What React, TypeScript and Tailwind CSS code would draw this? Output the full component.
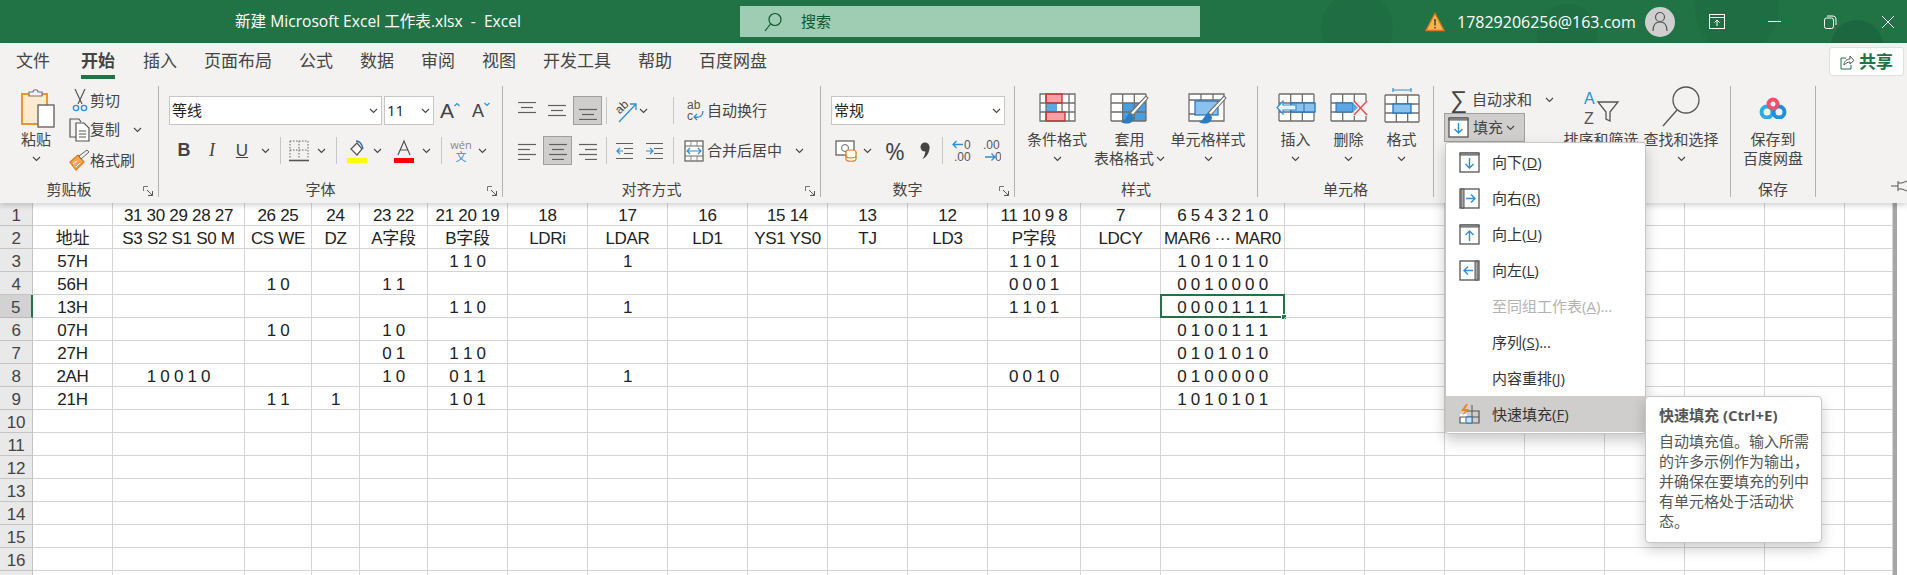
import type { ReactNode } from "react";

const blue = "#2e8fd6";
const gray = "#5f5f5f";

function Chev({ className = "" }: { className?: string }) {
  return (
    <svg width="9" height="6" viewBox="0 0 9 6" className={className}>
      <path d="M1 1l3.5 3.5L8 1" fill="none" stroke="#444" strokeWidth="1.1" />
    </svg>
  );
}

function Lines({ rows }: { rows: number[][] }) {
  return (
    <svg width="18" height="18" viewBox="0 0 18 18">
      {rows.map((r, i) => (
        <path key={i} d={`M${r[0]} ${r[2] + 0.5}H${r[1]}`} stroke={gray} strokeWidth="1.2" />
      ))}
    </svg>
  );
}

function Grid({ x, y, w, h, cols, rows }: { x: number; y: number; w: number; h: number; cols: number; rows: number }) {
  const d: string[] = [];
  for (let i = 0; i <= cols; i++) d.push(`M${x + (w * i) / cols} ${y}V${y + h}`);
  for (let i = 0; i <= rows; i++) d.push(`M${x} ${y + (h * i) / rows}H${x + w}`);
  return <path d={d.join("")} fill="none" stroke="#6e6e6e" strokeWidth="1.3" />;
}

// paint brush laid over the table style icons
const Brush = () => (
  <>
    <path d="M38 9L23 26l-3-2L36 7z" fill="#fff" stroke="#6e6e6e" strokeWidth="1.1" />
    <path d="M20 24c-3 1-4 7-9 9 5 3 13 2 13-5z" fill="#2b7cc4" />
  </>
);

const PasteIcon = () => (
  <svg width="36" height="40" viewBox="0 0 36 40">
    <rect x="2" y="6" width="25" height="30" fill="#fdeacf" stroke="#e8962e" strokeWidth="2" />
    <path d="M9 6V4h4c0-3 5-3 5 0h4v4H9z" fill="#f3f2f1" stroke="#777" strokeWidth="1.2" />
    <rect x="18" y="17" width="16" height="22" fill="#fff" stroke="#666" strokeWidth="1.4" />
  </svg>
);

const CutIcon = () => (
  <svg width="16" height="24" viewBox="0 0 16 24">
    <path d="M3 1l7 15M13 1L6 16" stroke="#555" strokeWidth="1.2" fill="none" />
    <circle cx="4" cy="20" r="2.6" fill="none" stroke={blue} strokeWidth="1.4" />
    <circle cx="12" cy="20" r="2.6" fill="none" stroke={blue} strokeWidth="1.4" />
  </svg>
);

const CopyIcon = () => (
  <svg width="21" height="24" viewBox="0 0 21 24">
    <path d="M7 19H1V1h9l2 3" fill="none" stroke="#555" strokeWidth="1.2" />
    <path d="M7 5h8l5 5v13H7z" fill="#fff" stroke="#555" strokeWidth="1.2" />
    <path d="M10 13h7M10 16h7M10 19h7" stroke="#555" />
  </svg>
);

const FormatBrushIcon = () => (
  <svg width="21" height="22" viewBox="0 0 21 22">
    <path d="M1 13l8-7 6 7-8 8z" fill="#f5a94e" stroke="#e07b12" strokeWidth="1.2" />
    <path d="M4 15l4-3M7 18l4-4" stroke="#fff" />
    <path d="M10 7l2 3 8-7-2-2z" fill="#eee" stroke="#666" />
  </svg>
);

const GrowIcon = ({ down }: { down?: boolean }) => (
  <div className="flex items-start font-['Liberation_Sans',sans-serif]">
    <span className={down ? "text-[18px] leading-[24px]" : "text-[21px] leading-[24px]"}>A</span>
    <svg width="6" height="5" viewBox="0 0 6 5" className="mt-[3px]">
      <path d={down ? "M.5 1L3 3.500 5.500 1" : "M.5 4L3 1.500 5.500 4"} fill="none" stroke={blue} strokeWidth="1.2" />
    </svg>
  </div>
);

const BorderIcon = () => (
  <svg width="20" height="22" viewBox="0 0 20 22">
    <path d="M1 1h18M1 1v18M19 1v18M10 1v18M1 10h18" stroke="#666" strokeDasharray="1.5 1.5" fill="none" />
    <path d="M0 20.500h20" stroke="#555" strokeWidth="1.6" />
  </svg>
);

const FillIcon = () => (
  <svg width="20" height="24" viewBox="0 0 20 24">
    <path d="M4 10l6-6 5 6-5 6z" fill="#fff" stroke="#555" strokeWidth="1.2" />
    <path d="M9 2c3 0 6 3 7 8" fill="none" stroke="#2b6ca8" strokeWidth="1.4" />
    <rect x="0" y="19" width="20" height="5" fill="#ffff00" />
  </svg>
);

const FontColorIcon = () => (
  <svg width="20" height="24" viewBox="0 0 20 24">
    <path d="M4 16L10 2l6 14M6 11h8" fill="none" stroke="#555" strokeWidth="1.2" />
    <rect x="0" y="19" width="20" height="5" fill="#ff0000" />
  </svg>
);

const WrapIcon = () => (
  <svg width="18" height="26" viewBox="0 0 18 26">
    <text x="1" y="11" fontSize="12" fill="#555" fontFamily="Liberation Sans">
      ab
    </text>
    <text x="1" y="22" fontSize="12" fill="#555" fontFamily="Liberation Sans">
      c
    </text>
    <path d="M8 19c6 1 9-1 9-6M11 16l-3 3 3 3" fill="none" stroke={blue} strokeWidth="1.3" />
  </svg>
);

const OrientIcon = () => (
  <span className="relative flex h-[26px] w-[24px] items-start">
    <span className="mt-[3px] -rotate-45 font-['Liberation_Sans',sans-serif] text-[12px] leading-[12px]">ab</span>
    <svg width="24" height="26" viewBox="0 0 24 26" className="absolute left-0 top-0">
      <path d="M4 24L21 6M15 6h6v6" fill="none" stroke={blue} strokeWidth="1.3" />
    </svg>
  </span>
);

const IndentIcon = ({ right }: { right?: boolean }) => (
  <svg width="19" height="18" viewBox="0 0 19 18">
    <path d="M1 1.500h17M9 6.500h9M9 11.500h9M1 16.500h17" stroke={gray} strokeWidth="1.2" />
    <path d={right ? "M1 9h6M5 6l3 3-3 3" : "M8 9H2M5 6L2 9l3 3"} fill="none" stroke={blue} strokeWidth="1.2" />
  </svg>
);

const MergeIcon = () => (
  <svg width="20" height="22" viewBox="0 0 20 22">
    <rect x="1" y="1" width="18" height="20" fill="#fff" stroke="#666" strokeWidth="1.3" />
    <path d="M1 6h18M1 16h18" stroke="#666" />
    <path d="M7 6v-5M13 6v-5M7 16v5M13 16v5" stroke="#888" />
    <path d="M3 11h14M6 8l-3 3 3 3M14 8l3 3-3 3" fill="none" stroke={blue} strokeWidth="1.2" />
  </svg>
);

const AccountingIcon = () => (
  <svg width="22" height="22" viewBox="0 0 22 22">
    <rect x="1" y="1" width="18" height="14" fill="#fff" stroke="#666" strokeWidth="1.3" />
    <circle cx="10" cy="8" r="3.500" fill="none" stroke="#666" />
    <ellipse cx="16" cy="12" rx="5" ry="2" fill="#fff" stroke="#e07b12" strokeWidth="1.2" />
    <path d="M11 12v7c0 3 10 3 10 0v-7" fill="#fff" stroke="#e07b12" strokeWidth="1.2" />
    <path d="M11 16c0 2.500 10 2.500 10 0" fill="none" stroke="#e07b12" strokeWidth="1.2" />
  </svg>
);

const CommaIcon = () => (
  <svg width="10" height="18" viewBox="0 0 10 18">
    <circle cx="5" cy="5" r="4.500" fill="#444" />
    <path d="M9.500 5c0 6-3 10-7 12 2-3 3-6 3-9z" fill="#444" />
  </svg>
);

function DecimalIcon({ inc }: { inc?: boolean }) {
  return (
    <svg width="20" height="24" viewBox="0 0 20 24">
      <path d={inc ? "M11 5.500H1M4.500 2L1 5.500 4.500 9" : "M4 18h10M10.500 14.500L14 18l-3.500 3.500"} fill="none" stroke={blue} strokeWidth="1.3" />
      {inc ? (
        <>
          <text x="12" y="10" fontSize="12" fill="#555" fontFamily="Liberation Sans">0</text>
          <text x="2" y="22" fontSize="12" fill="#555" fontFamily="Liberation Sans">.00</text>
        </>
      ) : (
        <>
          <text x="2" y="10" fontSize="12" fill="#555" fontFamily="Liberation Sans">.00</text>
          <text x="14" y="22" fontSize="12" fill="#555" fontFamily="Liberation Sans">0</text>
        </>
      )}
    </svg>
  );
}

const CondFormatIcon = () => (
  <svg width="37" height="30" viewBox="0 0 37 30">
    <rect x="1" y="1" width="35" height="27" fill="#fff" />
    <rect x="7" y="1" width="16" height="9" fill="#f8a0a6" />
    <rect x="7" y="10" width="11" height="9" fill="#5ba6e3" />
    <rect x="7" y="19" width="19" height="9" fill="#f8a0a6" />
    <path d="M1 1h35v27H1zM1 10h35M1 19h35M7 1v27M30 1v27M23 10v9" fill="none" stroke="#6e6e6e" strokeWidth="1.3" />
    <rect x="7" y="1" width="16" height="9" fill="none" stroke="#d13438" strokeWidth="1.4" />
    <rect x="7" y="19" width="19" height="9" fill="none" stroke="#d13438" strokeWidth="1.4" />
  </svg>
);

const TableStyleIcon = () => (
  <svg width="40" height="38" viewBox="0 0 40 38">
    <rect x="1" y="5" width="35" height="27" fill="#fff" />
    <rect x="12" y="14" width="24" height="18" fill="#4a9de0" />
    <Grid x={1} y={5} w={35} h={27} cols={3} rows={3} />
    <Brush />
  </svg>
);

const CellStyleIcon = () => (
  <svg width="40" height="38" viewBox="0 0 40 38">
    <rect x="1" y="5" width="35" height="27" fill="#fff" />
    <path d="M1 5h35v27H1zM1 11h35M13 5v6M25 5v6M1 25h6" fill="none" stroke="#6e6e6e" strokeWidth="1.3" />
    <rect x="7" y="12" width="23" height="14" fill="#8cc1ee" stroke="#1f72b8" strokeWidth="1.2" />
    <Brush />
  </svg>
);

const InsertCellIcon = () => (
  <svg width="40" height="30" viewBox="0 0 40 30">
    <rect x="3" y="1" width="35" height="27" fill="#fff" />
    <Grid x={3} y={1} w={35} h={27} cols={3} rows={3} />
    <rect x="15" y="10" width="24" height="9" fill="#8cc1ee" stroke="#1f72b8" strokeWidth="1.3" />
    <path d="M28 10v9" stroke="#1f72b8" />
    <path d="M20 12H7V8l-6 6.500L7 21v-4h13z" fill="#e6f1fb" stroke={blue} strokeWidth="1.2" />
  </svg>
);

const DeleteCellIcon = () => (
  <svg width="38" height="30" viewBox="0 0 38 30">
    <rect x="1" y="1" width="35" height="27" fill="#fff" />
    <Grid x={1} y={1} w={35} h={27} cols={3} rows={3} />
    <rect x="22" y="8" width="16" height="15" fill="#f3f2f1" />
    <rect x="6" y="10" width="17" height="9" fill="#5ba6e3" stroke="#1f72b8" />
    <path d="M23 10l5 4.500-5 4.500z" fill="#5ba6e3" />
    <path d="M24 8l13 14M37 8L24 22" stroke="#e8474c" strokeWidth="1.4" />
  </svg>
);

const FormatCellIcon = () => (
  <svg width="36" height="40" viewBox="0 0 36 40">
    <path d="M9 2h18M9 0v4M27 0v4" stroke={blue} strokeWidth="1.2" />
    <rect x="1" y="7" width="34" height="27" fill="#fff" />
    <Grid x={1} y={7} w={34} h={27} cols={3} rows={3} />
    <rect x="9" y="16" width="18" height="9" fill="#8cc1ee" stroke="#1f72b8" strokeWidth="1.3" />
  </svg>
);

const SortIcon = () => (
  <svg width="37" height="36" viewBox="0 0 37 36">
    <text x="1" y="14" fontSize="16" fill={blue} fontFamily="Liberation Sans">
      A
    </text>
    <text x="1" y="34" fontSize="16" fill="#555" fontFamily="Liberation Sans">
      Z
    </text>
    <path d="M15 12h20l-8 10v9l-4-2v-7z" fill="none" stroke="#555" strokeWidth="1.3" />
  </svg>
);

const FindIcon = () => (
  <svg width="38" height="44" viewBox="0 0 38 44">
    <circle cx="24" cy="14" r="13" fill="none" stroke="#555" strokeWidth="1.3" />
    <path d="M15 24L1 40" stroke="#555" strokeWidth="1.4" />
  </svg>
);

const BaiduIcon = () => (
  <svg width="28" height="22" viewBox="0 0 28 22">
    <circle cx="8" cy="15" r="5.500" fill="none" stroke="#2fa8e8" strokeWidth="4" />
    <circle cx="20" cy="15" r="5.500" fill="none" stroke="#1f8fe0" strokeWidth="4" />
    <circle cx="14" cy="7" r="4.500" fill="none" stroke="#f0506e" strokeWidth="4" />
  </svg>
);

function Launcher() {
  return (
    <svg width="11" height="11" viewBox="0 0 11 11" className="absolute right-[4px] bottom-0">
      <path d="M.5 5V.5H5" fill="none" stroke="#777" />
      <path d="M4 4l5.500 5.500M5 9.500h4.500V5" fill="none" stroke="#555" />
    </svg>
  );
}

function MenuIcon({ dir }: { dir: "down" | "right" | "up" | "left" }) {
  const frame = {
    down: "M1 3h19V1H1z",
    up: "M1 3h19V1H1z",
    right: "M2 1h3v19H2z",
    left: "M16 1h3v19h-3z",
  }[dir];
  const arrow = {
    down: "M10.500 6v10M6.500 12l4 4 4-4",
    up: "M10.500 17V7M6.500 11l4-4 4 4",
    right: "M7 10.500h9M12 6.500l4 4-4 4",
    left: "M14 10.500H5M9 6.500l-4 4 4 4",
  }[dir];
  return (
    <svg width="21" height="21" viewBox="0 0 21 21">
      <rect x="1" y="1" width="19" height="19" fill="#fff" stroke="#555" strokeWidth="1.3" />
      <path d={frame} fill="#aaa" stroke="#555" />
      <path d={arrow} fill="none" stroke={blue} strokeWidth="1.4" />
    </svg>
  );
}

const FlashFillIcon = () => (
  <svg width="21" height="20" viewBox="0 0 21 20">
    <rect x="1" y="10" width="7" height="9" fill="#fff" />
    <path d="M7 7h13v12H1v-6" fill="none" stroke="#555" strokeWidth="1.2" />
    <path d="M13 1v18M1 13h19" stroke="#555" />
    <path d="M7 19h6v-6H7z" fill="#cfe3f5" stroke="#1f72b8" />
    <path d="M7 0L2 7h4l-3 5 7-7H6l3-5z" fill="#e8861e" />
  </svg>
);

const WarnIcon = () => (
  <svg width="20" height="20" viewBox="0 0 20 20">
    <path d="M10 1.500L19 18.500H1z" fill="#f7b64e" stroke="#d97a18" strokeWidth="1.3" />
    <path d="M10 7v6.500M10 15v1.600" stroke="#3a3a3a" strokeWidth="1.4" />
  </svg>
);

function Big({ w, icon, lines, chevInline, chev }: { w: string; icon: ReactNode; lines: string[]; chevInline?: boolean; chev?: boolean }) {
  return (
    <div className={`flex flex-col items-center ${w}`}>
      <div className="flex h-[44px] items-center justify-center">{icon}</div>
      {lines.map((l, i) => (
        <div key={l} className="flex h-[19px] items-center whitespace-nowrap leading-[19px]">
          {l}
          {chevInline && i === 1 && <Chev className="ml-[2px]" />}
        </div>
      ))}
      {chev && (
        <div className="flex h-[19px] items-center">
          <Chev />
        </div>
      )}
    </div>
  );
}

function Group({ w, label, launcher, children }: { w: string; label: string; launcher?: boolean; children: ReactNode }) {
  return (
    <div className={`relative flex h-[111px] shrink-0 flex-col border-r border-[#b3b0ad] ${w}`}>
      <div className="h-[95px]">{children}</div>
      <div className={`flex h-[16px] justify-center leading-[17px] ${launcher ? "pr-[20px]" : ""}`}>{label}</div>
      {launcher && <Launcher />}
    </div>
  );
}

const Sep = ({ className = "" }: { className?: string }) => <div className={`h-[27px] w-px bg-[#c8c6c4] ${className}`} />;

const Combo = ({ w, text, className = "" }: { w: string; text: string; className?: string }) => (
  <div className={`flex h-[29px] items-center justify-between border border-[#c8c6c4] bg-white pl-[2px] pr-[3px] text-[15px] text-[#222] ${w} ${className}`}>
    {text}
    <Chev />
  </div>
);

const cellFont = "font-['Liberation_Sans','Noto_Sans_CJK_SC',sans-serif]";

const colW = [
  "w-[33px]", "w-[80px]", "w-[132px]", "w-[67px]", "w-[48px]", "w-[68px]", "w-[80px]", "w-[80px]", "w-[80px]", "w-[80px]", "w-[80px]", "w-[80px]",
  "w-[80px]", "w-[93px]", "w-[80px]", "w-[124px]", "w-[80px]", "w-[80px]", "w-[80px]", "w-[80px]", "w-[80px]", "w-[80px]", "w-[80px]", "w-[48px]",
];

const data: Record<number, string[]> = {
  1: ["", "31 30 29 28 27", "26 25", "24", "23 22", "21 20 19", "18", "17", "16", "15 14", "13", "12", "11 10 9 8", "7", "6 5 4 3 2 1 0"],
  2: ["地址", "S3 S2 S1 S0 M", "CS WE", "DZ", "A字段", "B字段", "LDRi", "LDAR", "LD1", "YS1 YS0", "TJ", "LD3", "P字段", "LDCY", "MAR6 ··· MAR0"],
  3: ["57H", "", "", "", "", "1 1 0", "", "1", "", "", "", "", "1 1 0 1", "", "1 0 1 0 1 1 0"],
  4: ["56H", "", "1 0", "", "1 1", "", "", "", "", "", "", "", "0 0 0 1", "", "0 0 1 0 0 0 0"],
  5: ["13H", "", "", "", "", "1 1 0", "", "1", "", "", "", "", "1 1 0 1", "", "0 0 0 0 1 1 1"],
  6: ["07H", "", "1 0", "", "1 0", "", "", "", "", "", "", "", "", "", "0 1 0 0 1 1 1"],
  7: ["27H", "", "", "", "0 1", "1 1 0", "", "", "", "", "", "", "", "", "0 1 0 1 0 1 0"],
  8: ["2AH", "1 0 0 1 0", "", "", "1 0", "0 1 1", "", "1", "", "", "", "", "0 0 1 0", "", "0 1 0 0 0 0 0"],
  9: ["21H", "", "1 1", "1", "", "1 0 1", "", "", "", "", "", "", "", "", "1 0 1 0 1 0 1"],
};

const rowNums = Array.from({ length: 17 }, (_, i) => i + 1);

function Sheet() {
  return (
    <div className="flex min-h-0 flex-1 overflow-hidden bg-white">
      <div className={`w-[1893px] shrink-0 ${cellFont} text-[17px] leading-[20px] tracking-[-0.3px] text-[#222]`}>
        {rowNums.map((r) => (
          <div key={r} className="flex h-[23px]">
            <div
              className={`flex shrink-0 items-center justify-center border-b border-r pt-[4px] text-[#444] ${colW[0]} ${
                r === 5 ? "border-b-[#b8b8b8] border-r-2 border-r-[#217346] bg-[#d2d2d2]" : "border-[#c4c4c4] bg-[#e9e9e9]"
              }`}
            >
              {/* row 17 only peeks in at the window edge */}
              {r < 17 ? r : ""}
            </div>
            {colW.slice(1).map((w, c) => (
              <div key={c} className={`relative flex shrink-0 items-center justify-center whitespace-nowrap border-b border-r border-[#d4d4d4] pt-[4px] ${w}`}>
                {data[r]?.[c] ?? ""}
                {r === 5 && c === 14 && (
                  <>
                    <div className="absolute -top-px -left-px h-[24px] w-[125px] border-2 border-[#217346]" />
                    <div className="absolute -right-[3px] -bottom-[3px] h-[6px] w-[6px] border border-white bg-[#217346]" />
                  </>
                )}
              </div>
            ))}
          </div>
        ))}
      </div>
      <div className="flex-1 border-l-4 border-[#a6a6a6] bg-white" />
    </div>
  );
}

const menuItems: { icon?: ReactNode; text: string; key: string; tail?: string; disabled?: boolean; active?: boolean }[] = [
  { icon: <MenuIcon dir="down" />, text: "向下", key: "D" },
  { icon: <MenuIcon dir="right" />, text: "向右", key: "R" },
  { icon: <MenuIcon dir="up" />, text: "向上", key: "U" },
  { icon: <MenuIcon dir="left" />, text: "向左", key: "L" },
  { text: "至同组工作表", key: "A", tail: "...", disabled: true },
  { text: "序列", key: "S", tail: "..." },
  { text: "内容重排", key: "J" },
  { icon: <FlashFillIcon />, text: "快速填充", key: "F", active: true },
];

export default function App() {
  return (
    <div className="relative flex h-[575px] w-[1907px] flex-col overflow-hidden bg-white font-['Open_Sans','Noto_Sans_CJK_SC',sans-serif] text-[15px] text-[#444]">
      {/* title bar */}
      <div className="relative flex h-[43px] shrink-0 items-center bg-[#217346] text-white">
        <svg width="640" height="43" className="absolute right-0 top-0" viewBox="0 0 640 43">
          <circle cx="90" cy="28" r="36" fill="#1f6d42" />
          <circle cx="300" cy="34" r="30" fill="#1f6d42" />
          <circle cx="470" cy="10" r="42" fill="#1f6d42" />
          <circle cx="590" cy="46" r="26" fill="#1d6740" />
        </svg>
        <div className="ml-[235px] w-[505px] whitespace-pre text-[15.6px]">新建 Microsoft Excel 工作表.xlsx  -  Excel</div>
        <div className="flex h-[31px] w-[460px] items-center bg-[#9fcdb3] pl-[24px] text-[#0d5a2f]">
          <svg width="18" height="20" viewBox="0 0 18 20">
            <circle cx="11" cy="7.500" r="6" fill="none" stroke="#0d5a2f" strokeWidth="1.2" />
            <path d="M6.500 12L1 19" stroke="#0d5a2f" strokeWidth="1.2" />
          </svg>
          <span className="ml-[19px]">搜索</span>
        </div>
        <div className="relative ml-[225px] flex items-center">
          <WarnIcon />
          <span className="ml-[12px] w-[188px] text-[16px]">17829206256@163.com</span>
          <div className="flex h-[30px] w-[30px] items-center justify-center rounded-full bg-[#cfcfcf]">
            <svg width="16" height="21" viewBox="0 0 16 21">
              <circle cx="8" cy="6" r="4.500" fill="none" stroke="#555" strokeWidth="1.2" />
              <path d="M1 20c0-6 3-9 7-9s7 3 7 9" fill="none" stroke="#555" strokeWidth="1.2" />
            </svg>
          </div>
          <svg width="16" height="15" viewBox="0 0 16 15" className="ml-[34px]">
            <rect x=".5" y=".5" width="15" height="14" fill="none" stroke="#fff" />
            <path d="M1 3.500h14M8 12V6M5.500 8.500L8 6l2.500 2.500" fill="none" stroke="#fff" />
          </svg>
          <div className="ml-[43px] h-px w-[13px] bg-white" />
          <svg width="13" height="14" viewBox="0 0 13 14" className="ml-[43px]">
            <rect x=".5" y="3" width="9" height="10.500" rx="2" fill="none" stroke="#fff" />
            <path d="M3 1h5c3 0 4 1 4 4v5" fill="none" stroke="#fff" />
          </svg>
          <svg width="14" height="14" viewBox="0 0 14 14" className="ml-[44px]">
            <path d="M1 1l12 12M13 1L1 13" stroke="#fff" />
          </svg>
        </div>
      </div>

      {/* ribbon */}
      <div className="relative z-10 flex h-[160px] shrink-0 flex-col bg-[#f3f2f1] shadow-[0_2px_6px_rgba(0,0,0,0.2)]">
        <div className="flex h-[43px] shrink-0 items-start justify-between pl-[16px] pr-[3px]">
          <div className="flex gap-[27px] pt-[7px] text-[17px] leading-[22px]">
            <span className="mr-[4px]">文件</span>
            <span className="mr-[1px] flex h-[29px] flex-col justify-between font-bold">
              开始
              <span className="h-[4px] bg-[#217346]" />
            </span>
            {["插入", "页面布局", "公式", "数据", "审阅", "视图", "开发工具", "帮助", "百度网盘"].map((t) => (
              <span key={t}>{t}</span>
            ))}
          </div>
          <div className="mt-[4px] flex h-[29px] w-[75px] items-center justify-center gap-[4px] rounded-[3px] border border-[#e1dfdd] bg-white text-[17px] font-bold text-[#217346]">
            <svg width="15" height="16" viewBox="0 0 15 16">
              <path d="M6 4H1v11h10v-4" fill="none" stroke="#217346" />
              <path d="M4 11c0-4 3-6 6-6V2l4 4.500L10 10V8C8 8 6 9 4 11z" fill="none" stroke="#555" />
            </svg>
            共享
          </div>
        </div>

        <div className="flex items-start">
          <Group w="w-[159px]" label="剪贴板" launcher>
            <div className="flex">
              <div className="flex w-[69px] flex-col items-center pl-[3px]">
                <div className="flex h-[44px] items-center justify-center pl-[4px]">
                  <PasteIcon />
                </div>
                <div className="h-[19px] leading-[19px]">粘贴</div>
                <div className="flex h-[19px] items-center">
                  <Chev />
                </div>
              </div>
              <div className="flex flex-col">
                <div className="flex h-[28px] items-center">
                  <span className="flex w-[21px] justify-center"><CutIcon /></span>
                  <span>剪切</span>
                </div>
                <div className="flex h-[31px] items-center">
                  <span className="flex w-[21px] justify-center"><CopyIcon /></span>
                  <span>复制</span>
                  <Chev className="ml-[13px]" />
                </div>
                <div className="flex h-[30px] items-center">
                  <span className="flex w-[21px] justify-center"><FormatBrushIcon /></span>
                  <span>格式刷</span>
                </div>
              </div>
            </div>
          </Group>

          <Group w="w-[344px]" label="字体" launcher>
            <div className="flex items-center pl-[10px] pt-[10px]">
              <Combo w="w-[213px]" text="等线" />
              <Combo w="w-[50px]" text="11" className="ml-[2px]" />
              <span className="ml-[6px] w-[20px]"><GrowIcon /></span>
              <span className="ml-[12px] w-[18px]"><GrowIcon down /></span>
            </div>
            <div className="mt-[11px] flex h-[29px] items-center pl-[14px] text-[#444]">
              <span className="w-[22px] text-center font-['Liberation_Sans'] text-[18px] font-bold">B</span>
              <span className="w-[34px] text-center font-['Liberation_Serif'] text-[18px] italic">I</span>
              <span className="w-[26px] text-center font-['Liberation_Sans'] text-[17px] underline">U</span>
              <span className="flex w-[20px] justify-center"><Chev /></span>
              <Sep className="ml-[5px]" />
              <span className="ml-[8px] w-[20px]"><BorderIcon /></span>
              <span className="flex w-[24px] justify-center"><Chev /></span>
              <Sep className="ml-[3px]" />
              <span className="ml-[10px] w-[18px]"><FillIcon /></span>
              <span className="flex w-[24px] justify-center"><Chev /></span>
              <span className="ml-[5px] w-[20px]"><FontColorIcon /></span>
              <span className="flex w-[24px] justify-center"><Chev /></span>
              <Sep className="ml-[3px]" />
              <span className="ml-[9px] flex w-[20px] flex-col items-center text-[11px] leading-[12px] text-[#888]">
                wén
                <span className="text-[#2e8fd6]">文</span>
              </span>
              <span className="flex w-[22px] justify-center"><Chev /></span>
            </div>
          </Group>

          <Group w="w-[318px]" label="对齐方式" launcher>
            <div className="flex items-center pl-[15px] pt-[10px]">
              <span className="w-[18px]"><Lines rows={[[0, 18, 0], [3, 15, 5], [0, 18, 10]]} /></span>
              <span className="ml-[12px] w-[18px]"><Lines rows={[[0, 18, 3], [3, 15, 8], [0, 18, 13]]} /></span>
              <span className="ml-[7px] flex h-[29px] w-[29px] items-center justify-center border border-[#a19f9d] bg-[#cfcecc]">
                <Lines rows={[[0, 18, 7], [3, 15, 12], [0, 18, 17]]} />
              </span>
              <Sep className="ml-[4px]" />
              <span className="ml-[8px] w-[20px]"><OrientIcon /></span>
              <span className="flex w-[16px] justify-center"><Chev /></span>
              <Sep className="ml-[22px]" />
              <span className="ml-[12px] w-[17px]"><WrapIcon /></span>
              <span className="ml-[4px]">自动换行</span>
            </div>
            <div className="mt-[11px] flex h-[29px] items-center pl-[15px]">
              <span className="w-[18px]"><Lines rows={[[0, 18, 2], [0, 12, 7], [0, 18, 12], [0, 12, 17]]} /></span>
              <span className="ml-[7px] flex h-[29px] w-[29px] items-center justify-center border border-[#a19f9d] bg-[#cfcecc]">
                <Lines rows={[[0, 18, 2], [3, 15, 7], [0, 18, 12], [3, 15, 17]]} />
              </span>
              <span className="ml-[7px] w-[18px]"><Lines rows={[[0, 18, 2], [6, 18, 7], [0, 18, 12], [6, 18, 17]]} /></span>
              <Sep className="ml-[9px]" />
              <span className="ml-[8px] w-[18px]"><IndentIcon /></span>
              <span className="ml-[12px] w-[18px]"><IndentIcon right /></span>
              <Sep className="ml-[10px]" />
              <span className="ml-[10px] w-[18px]"><MergeIcon /></span>
              <span className="ml-[5px]">合并后居中</span>
              <Chev className="ml-[13px]" />
            </div>
          </Group>

          <Group w="w-[194px]" label="数字" launcher>
            <div className="pl-[10px] pt-[10px]">
              <Combo w="w-[174px]" text="常规" />
            </div>
            <div className="mt-[11px] flex h-[29px] items-center pl-[14px]">
              <span className="w-[20px]"><AccountingIcon /></span>
              <span className="flex w-[24px] justify-center"><Chev /></span>
              <span className="ml-[6px] w-[18px] text-[24px] leading-none">%</span>
              <span className="ml-[17px] w-[10px]"><CommaIcon /></span>
              <Sep className="ml-[12px]" />
              <span className="ml-[9px] w-[19px]"><DecimalIcon inc /></span>
              <span className="ml-[10px] w-[19px]"><DecimalIcon /></span>
            </div>
          </Group>

          <Group w="w-[243px]" label="样式">
            <div className="flex pl-[10px]">
              <Big w="w-[64px]" icon={<CondFormatIcon />} lines={["条件格式"]} chev />
              <Big w="w-[81px]" icon={<TableStyleIcon />} lines={["套用", "表格格式"]} chevInline />
              <Big w="w-[76px]" icon={<CellStyleIcon />} lines={["单元格样式"]} chev />
            </div>
          </Group>

          <Group w="w-[176px]" label="单元格">
            <div className="flex pl-[11px]">
              <Big w="w-[53px]" icon={<InsertCellIcon />} lines={["插入"]} chev />
              <Big w="w-[53px]" icon={<DeleteCellIcon />} lines={["删除"]} chev />
              <Big w="w-[53px]" icon={<FormatCellIcon />} lines={["格式"]} chev />
            </div>
          </Group>

          <Group w="w-[297px]" label="编辑">
            <div className="flex pl-[10px]">
              <div className="w-[117px]">
                <div className="flex h-[27px] items-center pl-[6px]">
                  <span className="w-[22px] font-['Liberation_Sans'] text-[24px] leading-none">∑</span>
                  <span>自动求和</span>
                  <Chev className="ml-[13px]" />
                </div>
                <div className="flex h-[29px] w-[81px] items-center border border-[#a19f9d] bg-[#cfcecc] pl-[3px]">
                  <MenuIcon dir="down" />
                  <span className="ml-[4px]">填充</span>
                  <Chev className="ml-[3px]" />
                </div>
              </div>
              <Big w="w-[80px]" icon={<SortIcon />} lines={["排序和筛选"]} chev />
              <Big w="w-[80px]" icon={<FindIcon />} lines={["查找和选择"]} chev />
            </div>
          </Group>

          <Group w="w-[85px]" label="保存">
            <Big w="w-full" icon={<BaiduIcon />} lines={["保存到", "百度网盘"]} />
          </Group>

          <div className="ml-auto mr-0 self-end pb-[5px]">
            <svg width="16" height="12" viewBox="0 0 16 12">
              <path d="M0 6h7M7 1v10M7 3h4l5-2M7 9h4l5 2" fill="none" stroke="#555" />
            </svg>
          </div>
        </div>
      </div>

      <Sheet />

      {/* fill menu */}
      <div className="absolute left-[1445px] top-[142px] z-20 w-[201px] rounded-[3px] border border-[#c8c6c4] bg-white py-px shadow-[0_6px_14px_rgba(0,0,0,0.22)]">
        {menuItems.map((m) => (
          <div
            key={m.text}
            className={`flex h-[36px] items-center whitespace-nowrap ${m.active ? "bg-[#cfcecc]" : ""} ${m.disabled ? "text-[#b4b2b0]" : "text-[#333]"}`}
          >
            <span className="flex w-[46px] justify-center pl-[1px]">{m.icon}</span>
            <span>
              {m.text}(<u>{m.key}</u>){m.tail}
            </span>
          </div>
        ))}
      </div>

      {/* tooltip */}
      <div className="absolute left-[1645px] top-[396px] z-20 h-[147px] w-[177px] rounded-[4px] border border-[#c8c6c4] bg-white pl-[13px] pt-[7px] text-[#555] shadow-[0_6px_14px_rgba(0,0,0,0.2)]">
        <div className="font-bold leading-[22px]">快速填充 (Ctrl+E)</div>
        <div className="mt-[5px] w-[152px] leading-[20px]">自动填充值。输入所需的许多示例作为输出，并确保在要填充的列中有单元格处于活动状态。</div>
      </div>
    </div>
  );
}
